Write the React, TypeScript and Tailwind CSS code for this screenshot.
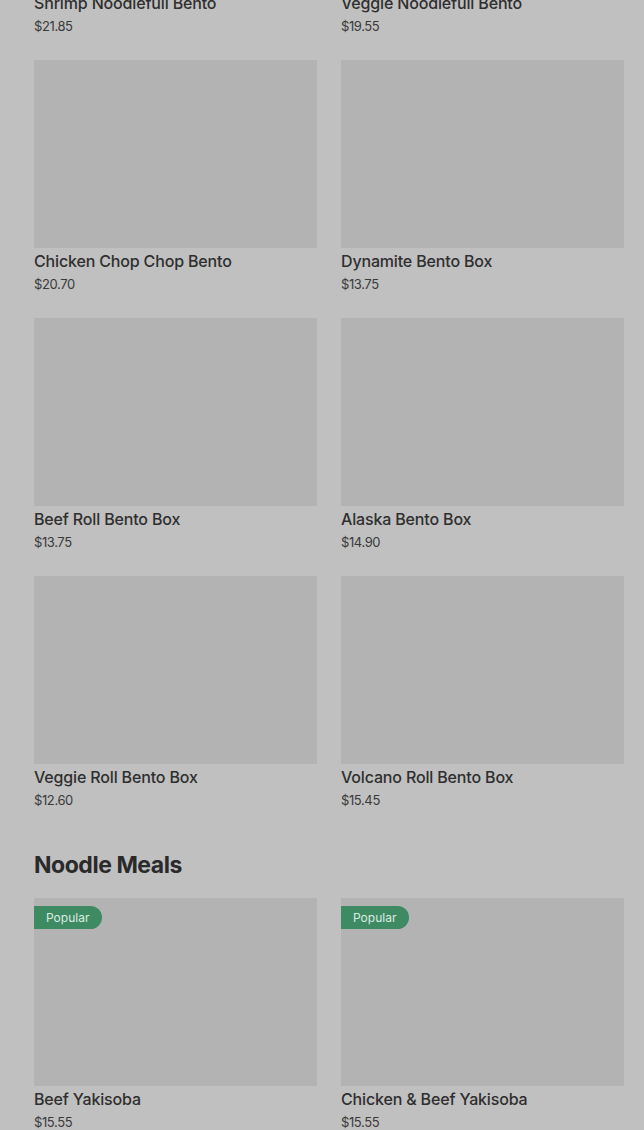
const bentos = [
  { name: "Shrimp Noodlefull Bento", price: "$21.85" },
  { name: "Veggie Noodlefull Bento", price: "$19.55" },
  { name: "Chicken Chop Chop Bento", price: "$20.70" },
  { name: "Dynamite Bento Box", price: "$13.75" },
  { name: "Beef Roll Bento Box", price: "$13.75" },
  { name: "Alaska Bento Box", price: "$14.90" },
  { name: "Veggie Roll Bento Box", price: "$12.60" },
  { name: "Volcano Roll Bento Box", price: "$15.45" },
];

const noodles = [
  { name: "Beef Yakisoba", price: "$15.55", popular: true },
  { name: "Chicken & Beef Yakisoba", price: "$15.55", popular: true },
];

type Item = { name: string; price: string; popular?: boolean };

function MenuCard({ item }: { item: Item }) {
  return (
    <div className="flex flex-col">
      <div className="relative h-[188px] bg-[#b3b3b3]">
        {item.popular && (
          <span className="absolute left-0 top-2 h-[23px] flex items-center pl-3 pr-[13px] rounded-r-full bg-[#3e8a62] text-[12px] text-[#dcece3]">
            Popular
          </span>
        )}
      </div>
      <div className="mt-[3px] text-[16px] leading-5 font-medium tracking-[-0.01em] text-[#2f2f2f]">{item.name}</div>
      <div className="mt-1 text-[13px] leading-[18px] tracking-[-0.03em] text-[#3a3a3a]">{item.price}</div>
    </div>
  );
}

export default function App() {
  return (
    <main className="h-[1130px] overflow-hidden bg-[#c0c0c0]" style={{ fontFamily: "Inter, 'Noto Sans', sans-serif" }}>
      <div className="-mt-[198px] pl-[34px] pr-[20px]">
        <div className="grid grid-cols-2 gap-x-6 gap-y-[25px]">
          {bentos.map((b) => (
            <MenuCard key={b.name} item={b} />
          ))}
        </div>

        <h2 className="mt-10 text-[23px] leading-8 font-bold tracking-[-0.02em] text-[#2a2a2a]">Noodle Meals</h2>

        <div className="mt-[17px] grid grid-cols-2 gap-x-6 gap-y-[25px]">
          {noodles.map((n) => (
            <MenuCard key={n.name} item={n} />
          ))}
        </div>
      </div>
    </main>
  );
}
